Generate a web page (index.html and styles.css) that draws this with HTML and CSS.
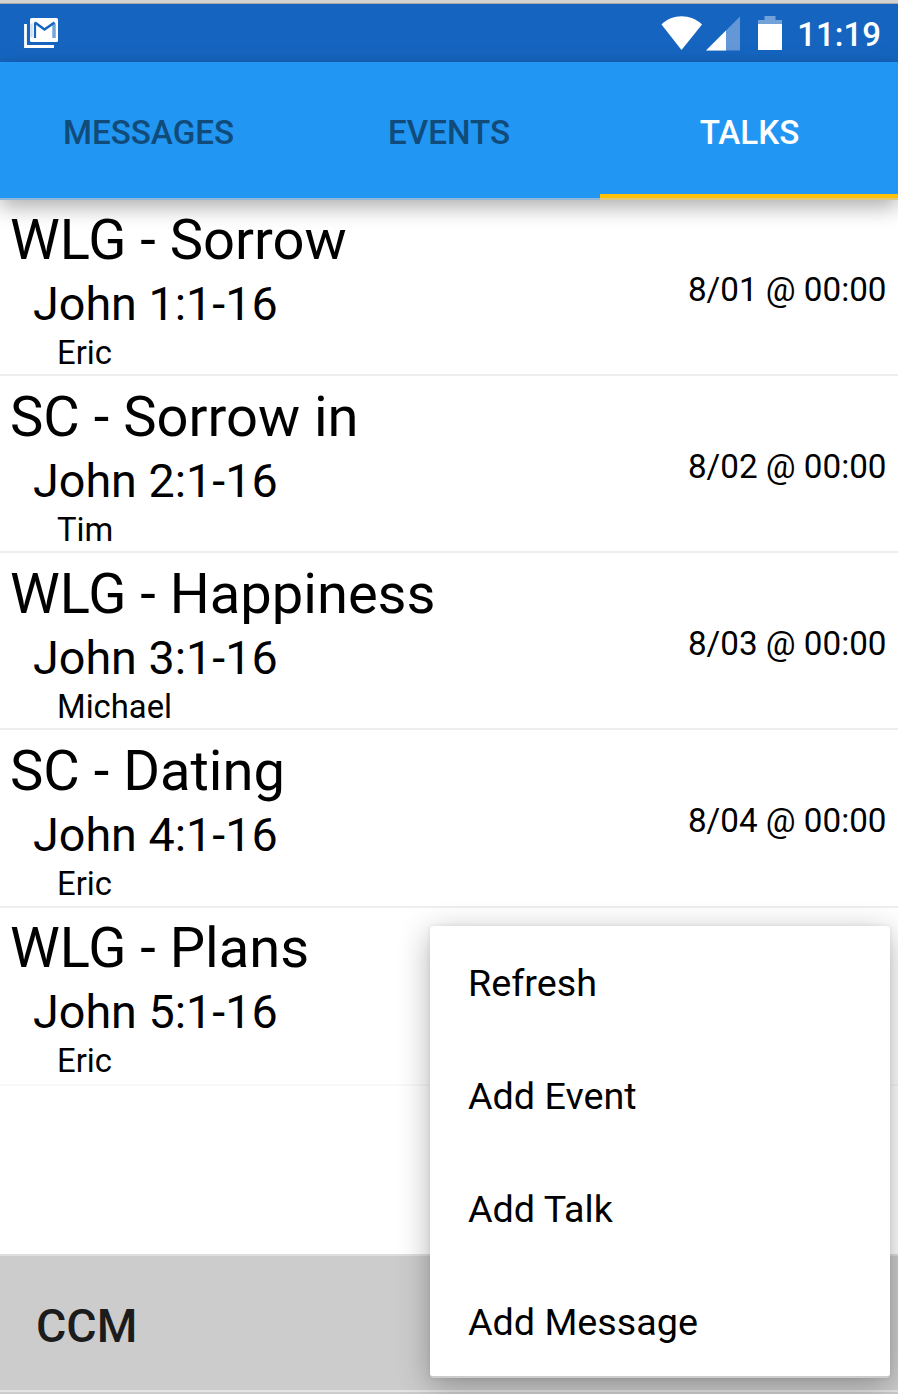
FILE: index.html
```html
<!DOCTYPE html>
<html lang="en">
<head>
<meta charset="utf-8">
<title>CCM</title>
<link rel="stylesheet" href="styles.css">
</head>
<body>
<div class="screen">
  <header class="status">
    <svg class="status-mail" width="36" height="34" viewBox="0 0 36 34">
      <path d="M1.500 7V29.500H30" fill="none" stroke="#fff" stroke-width="2.800"/>
      <rect x="6" y="1" width="28" height="24" rx="1.500" fill="#fff"/>
      <path d="M7.500 20.500V6.500" fill="none" stroke="#cfdff3" stroke-width="2.500"/>
      <path d="M11 21V5.500" fill="none" stroke="#1565c0" stroke-width="2.200"/>
      <path d="M30 21V6.500" fill="none" stroke="#76a4de" stroke-width="3.500"/>
      <path d="M11 5.500L20.500 12.500L30.500 5.500" fill="none" stroke="#1565c0" stroke-width="2.600"/>
    </svg>
    <div class="status-right">
      <svg class="network" width="97" height="36" viewBox="0 0 97 36">
        <path d="M.5 8.500C11-2.500 30-2.500 41 8.500L20.500 34Z" fill="#fff"/>
        <path d="M45 34.500L79 .5V34.500Z" fill="#6497d6"/>
        <path d="M45 34.500L65 14.500V34.500Z" fill="#fff"/>
      </svg>
      <svg class="battery" width="24" height="36" viewBox="0 0 24 36">
        <path d="M0 8.500V4H6.500V0H17.500V4H24V8.500Z" fill="#73a2da"/>
        <path d="M0 8H24V34H0Z" fill="#fff"/>
      </svg>
      <span class="clock">11:19</span>
    </div>
  </header>
  <nav class="tabs">
    <div class="tab">MESSAGES</div>
    <div class="tab">EVENTS</div>
    <div class="tab tab-active">TALKS</div>
  </nav>
  <main class="list">
    <article class="talk"><div><h2 class="title">WLG - Sorrow</h2><p class="verse">John 1:1-16</p><p class="speaker">Eric</p></div><time class="time">8/01 @ 00:00</time></article>
    <article class="talk"><div><h2 class="title">SC - Sorrow in</h2><p class="verse">John 2:1-16</p><p class="speaker">Tim</p></div><time class="time">8/02 @ 00:00</time></article>
    <article class="talk"><div><h2 class="title">WLG - Happiness</h2><p class="verse">John 3:1-16</p><p class="speaker">Michael</p></div><time class="time">8/03 @ 00:00</time></article>
    <article class="talk"><div><h2 class="title">SC - Dating</h2><p class="verse">John 4:1-16</p><p class="speaker">Eric</p></div><time class="time">8/04 @ 00:00</time></article>
    <article class="talk talk-last"><div><h2 class="title">WLG - Plans</h2><p class="verse">John 5:1-16</p><p class="speaker">Eric</p></div></article>
  </main>
  <footer class="toolbar">CCM</footer>
  <div class="edge"></div>
  <div class="menu">
    <div class="item">Refresh</div>
    <div class="item">Add Event</div>
    <div class="item">Add Talk</div>
    <div class="item">Add Message</div>
  </div>
</div>
</body>
</html>
```

FILE: styles.css
```css
* { box-sizing: border-box; }
body { margin: 0; background: #fff; font-family: Roboto, sans-serif; color: #000; }
h2, p { margin: 0; font-weight: 400; }
svg { display: block; }
.screen {
  position: relative;
  width: 898px;
  height: 1394px;
  overflow: hidden;
  display: flex;
  flex-direction: column;
  border-top: 3px solid #d2d2d2;
}
.status {
  height: 59px;
  flex: none;
  display: flex;
  justify-content: space-between;
  background: #1565c0;
  border-top: 1px solid #b0a8a6;
  padding: 12px 17px 0 24px;
}
.status-mail { margin-top: 1px; }
.status-right { display: flex; }
.clock { margin-left: 15px; font-size: 33px; font-weight: 500; line-height: 38px; color: #fff; }
.tabs {
  position: relative;
  z-index: 1;
  height: 138px;
  flex: none;
  display: grid;
  grid-template-columns: 300px 300px 298px;
  background: #2196f3;
  border-bottom: 2px solid #90b7d9;
  box-shadow: 0 7px 20px rgba(0, 0, 0, .32);
}
.tab { padding-top: 51px; text-align: center; font-size: 33.2px; line-height: 40px; font-weight: 500; color: #114b7a; }
.tab:first-child { padding-right: 3px; }
.tab:nth-child(2) { padding-right: 2px; }
.tab-active {
  margin-bottom: -2px;
  padding-left: 1px;
  color: #fff;
  border-bottom: 2px solid #dfc877;
  box-shadow: inset 0 -4px #ffc107;
}
.list { flex: 1; }
.talk {
  display: flex;
  justify-content: space-between;
  height: 177.2px;
  padding: 7px 11.5px 0 10px;
  border-bottom: 2px solid #eee;
}
.talk:first-child { height: 176px; padding-top: 6px; }
.talk-last { height: 178px; padding-top: 6px; border-bottom-color: #f8f8f8; }
.title { padding-top: 1px; font-size: 56.1px; line-height: 66px; }
.verse { padding-left: 23px; font-size: 46.7px; line-height: 63px; }
.speaker { padding: 1px 0 0 47px; font-size: 32.8px; line-height: 32px; }
.time { padding-top: 64px; font-size: 33.2px; line-height: 40px; }
.toolbar {
  height: 136px;
  flex: none;
  background: #ccc;
  border-top: 2px solid #dedede;
  padding: 42px 36px 0;
  font-size: 46.5px;
  line-height: 56px;
  font-weight: 500;
  color: #1c1c1c;
}
.edge { height: 4px; flex: none; background: #ccc; border-top: 2px solid #e4e4e4; }
.menu {
  position: absolute;
  z-index: 2;
  left: 430px;
  top: 923px;
  width: 460px;
  height: 452px;
  padding-top: 1px;
  background: #fff;
  border-bottom: 2px solid #ccc;
  border-radius: 4px;
  box-shadow: 0 8px 32px rgba(0, 0, 0, .3), 0 0 5px rgba(0, 0, 0, .08);
}
.item { height: 113px; padding-left: 38px; font-size: 37.7px; line-height: 113px; }
```
